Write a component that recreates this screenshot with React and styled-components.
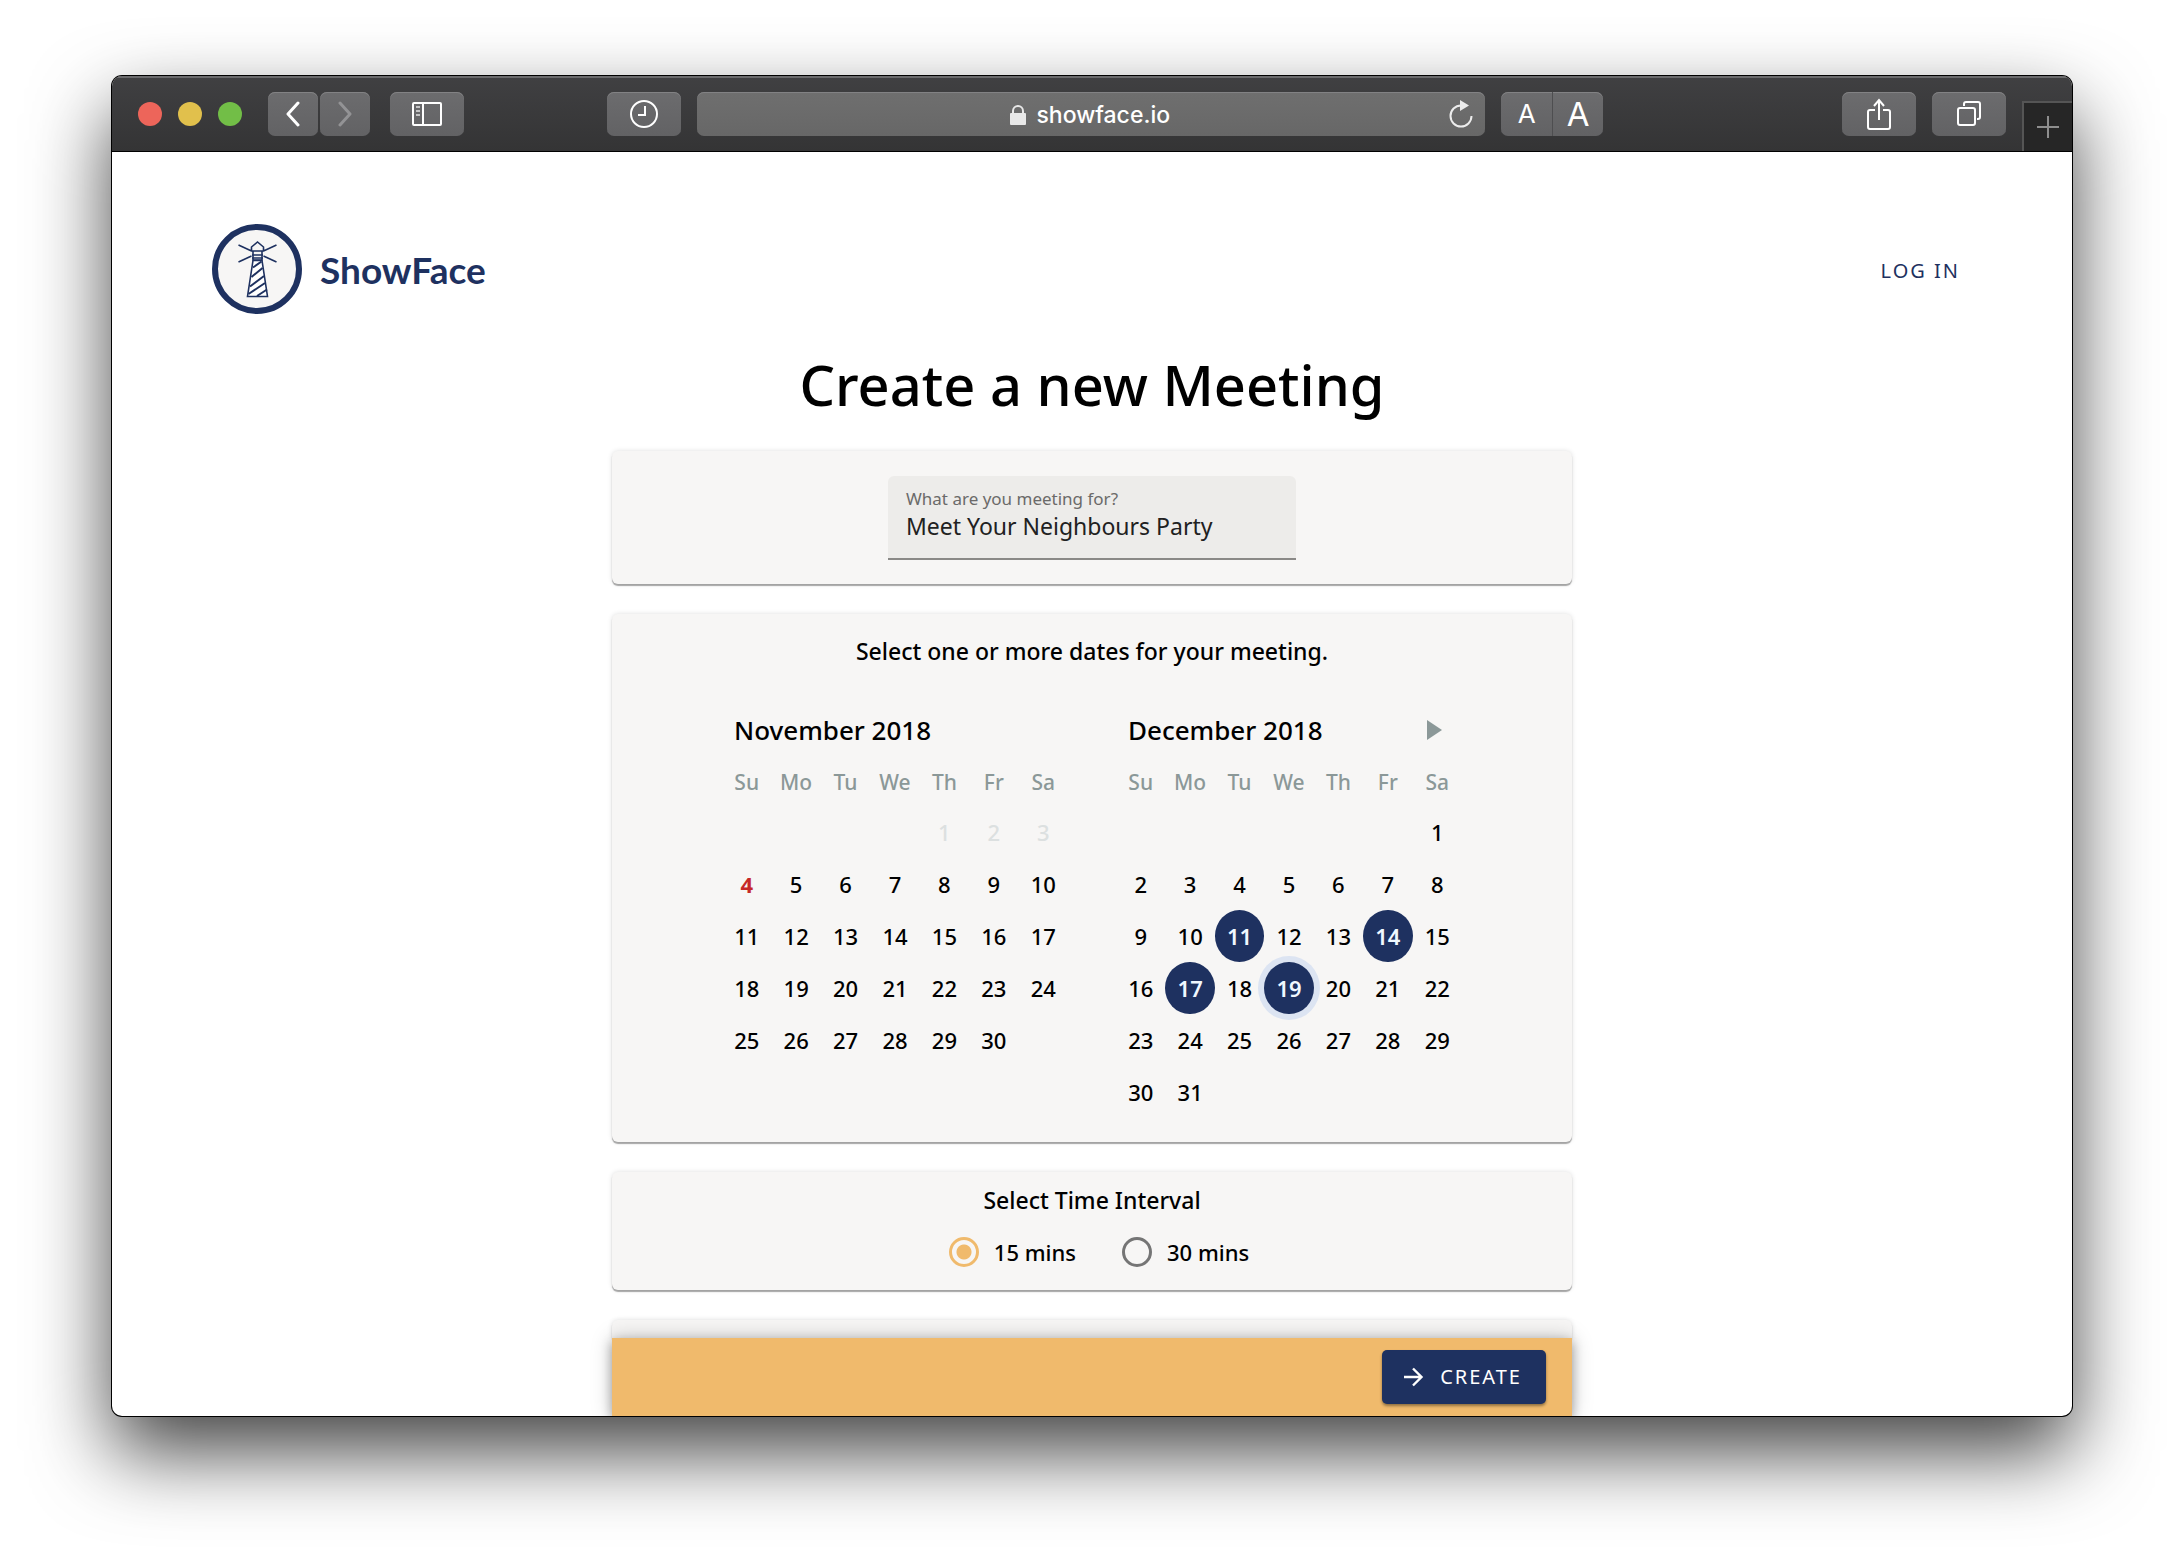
import React, { useState } from "react";
import styled, { createGlobalStyle } from "styled-components";

const NAVY = "#1e3160";
const AMBER = "#f0ba6c";
const PAPER = "#f7f6f5";
const UI_FONT = '"Noto Sans", "Open Sans", sans-serif';

const GlobalStyle = createGlobalStyle`
  *, *::before, *::after { box-sizing: border-box; }
  body { margin: 0; background: #fff; font-family: ${UI_FONT}; color: #000; }
  button { font: inherit; border: 0; padding: 0; margin: 0; cursor: pointer; }
  h1, h2, h3 { margin: 0; font-weight: 500; }
`;

const Desktop = styled.div`
  height: 100vh;
  min-height: 1564px;
  padding: 76px 112px 148px;
  display: flex;
  overflow: hidden;
`;

const Window = styled.div`
  flex: 1;
  min-width: 0;
  display: flex;
  flex-direction: column;
  border-radius: 10px;
  overflow: hidden;
  background: #fff;
  box-shadow: 0 0 0 1px #000, 0 36px 80px rgba(0, 0, 0, 0.74);
`;

const TitleBar = styled.div`
  height: 76px;
  flex: none;
  display: flex;
  align-items: center;
  padding-left: 26px;
  background: linear-gradient(#404042, #343435);
  border-bottom: 1px solid #000;
  box-shadow: inset 0 2px 0 #6b6b6d;
`;

const Lights = styled.div`
  display: flex;
  gap: 16px;
  margin-right: 26px;
`;

const Light = styled.button`
  width: 24px;
  height: 24px;
  border-radius: 50%;
  background: ${(p) => p.$color};
`;

const BarButton = styled.button`
  flex: none;
  width: ${(p) => p.$width || 74}px;
  height: 44px;
  display: flex;
  align-items: center;
  justify-content: center;
  color: ${(p) => (p.$dim ? "#939395" : "#fff")};
  background: linear-gradient(#6c6c6e, #626264);
  border-radius: ${(p) => p.$radius || "7px"};
  box-shadow: inset 0 1px 0 #828284;
`;

const Group = styled.div`
  display: flex;
  gap: ${(p) => p.$gap || 0}px;
  margin-right: ${(p) => p.$after || 0}px;
`;

const SizeButton = styled(BarButton)`
  font-family: Inter, sans-serif;
  font-size: ${(p) => p.$size}px;
  & + & { border-left: 1px solid #4e4e50; }
`;

const Spacer = styled.div`
  flex: ${(p) => p.$grow};
`;

const Address = styled.div`
  flex: 0 1 788px;
  height: 44px;
  margin: 0 16px;
  padding: 0 12px 0 34px;
  display: flex;
  align-items: center;
  background: linear-gradient(#6f6f6f, #676767);
  border-radius: 7px;
  box-shadow: inset 0 1px 0 #828284;
`;

const AddressText = styled.div`
  flex: 1;
  padding-top: 2px;
  display: flex;
  align-items: center;
  justify-content: center;
  gap: 10px;
  color: #fff;
  font: 500 23px/32px Inter, sans-serif;
`;

const PlainIconButton = styled.button`
  display: flex;
  background: none;
  color: ${(p) => p.$color};
`;

const NewTab = styled.button`
  align-self: flex-end;
  width: 50px;
  height: 50px;
  margin-left: 16px;
  display: flex;
  align-items: center;
  justify-content: center;
  color: #8e8e8e;
  background: #262626;
  border-left: 2px solid #555;
  border-top: 2px solid #555;
`;

const Page = styled.div`
  flex: 1;
  min-height: 0;
  display: flex;
  flex-direction: column;
`;

const Header = styled.header`
  display: flex;
  align-items: center;
  justify-content: space-between;
  padding: 72px 100px 0;
`;

const Brand = styled.a`
  display: flex;
  align-items: center;
  gap: 18px;
  color: ${NAVY};
  text-decoration: none;
`;

const BrandName = styled.span`
  padding-top: 2px;
  font: 700 37px/48px Lato, sans-serif;
`;

const LogIn = styled.a`
  padding: 16px 12px 12px;
  color: ${NAVY};
  font-size: 20px;
  line-height: 28px;
  letter-spacing: 2px;
  text-decoration: none;
`;

const Title = styled.h1`
  margin: 30px 0 27px;
  text-align: center;
  font-size: 56px;
  line-height: 80px;
`;

const Column = styled.main`
  flex: 1;
  width: 100%;
  max-width: 960px;
  margin: 0 auto;
  display: flex;
  flex-direction: column;
  gap: 30px;
`;

const Card = styled.section`
  padding: ${(p) => p.$pad || "0"};
  display: flex;
  flex-direction: column;
  align-items: center;
  background: ${PAPER};
  border-radius: 6px;
  box-shadow: 0 2px 1px rgba(0, 0, 0, 0.32), 0 0 5px rgba(0, 0, 0, 0.13);
`;

const NextCard = styled(Card)`
  flex: 1;
  border-radius: 6px 6px 0 0;
`;

const Field = styled.label`
  width: 408px;
  height: 84px;
  padding: 12px 18px 0;
  display: flex;
  flex-direction: column;
  background: #edecea;
  border-bottom: 2px solid #8a8987;
  border-radius: 6px 6px 0 0;
`;

const FieldLabel = styled.span`
  color: #6b6a69;
  font-size: 17px;
  line-height: 22px;
`;

const FieldInput = styled.input`
  width: 100%;
  height: 32px;
  padding: 0;
  border: 0;
  outline: 0;
  background: none;
  color: #212121;
  font: 400 23px/32px ${UI_FONT};
`;

const CardHeading = styled.h2`
  font-size: 23px;
  line-height: 32px;
`;

const Months = styled.div`
  display: flex;
  gap: 48px;
  margin-top: 45px;
`;

const Month = styled.div`
  width: 346px;
`;

const MonthBar = styled.div`
  display: flex;
  align-items: center;
  justify-content: space-between;
  padding: 0 20px 0 12px;
`;

const MonthName = styled.h3`
  font-size: 26px;
  line-height: 36px;
`;

const Days = styled.table`
  width: 100%;
  margin-top: 18px;
  table-layout: fixed;
  border-collapse: collapse;
`;

const Weekday = styled.th`
  height: 40px;
  padding: 0 0 8px;
  color: #8b9898;
  font-size: 21px;
  line-height: 28px;
  font-weight: 500;
`;

const DayCell = styled.td`
  height: 52px;
  padding: 0;
`;

const dayColor = (p) =>
  p.$selected ? "#f0f8ff" : p.$today ? "#c62828" : p.disabled ? "#dce0e0" : "#000";

const Day = styled.button`
  display: block;
  width: 100%;
  height: 52px;
  border-radius: 50%;
  outline: 0;
  background: ${(p) => (p.$selected ? NAVY : "none")};
  box-shadow: ${(p) => (p.$focused ? "0 0 0 6px #dce4f2" : "none")};
  color: ${dayColor};
  font-size: 22px;
  line-height: 52px;
  font-weight: ${(p) => (p.$today ? 700 : p.$selected ? 600 : 500)};
`;

const Options = styled.div`
  display: flex;
  gap: 46px;
  padding-left: 14px;
  margin-top: 20px;
`;

const Option = styled.label`
  display: flex;
  align-items: center;
  gap: 15px;
  font-size: 22px;
  line-height: 32px;
  font-weight: 500;
`;

const Radio = styled.input`
  appearance: none;
  width: 30px;
  height: 30px;
  margin: 0;
  border: 3px solid #757575;
  border-radius: 50%;
  &:checked {
    border-color: ${AMBER};
    background: radial-gradient(circle, ${AMBER} 7px, transparent 8px);
  }
`;

const ActionBar = styled.div`
  position: relative;
  flex: none;
  width: 100%;
  max-width: 960px;
  height: 78px;
  margin: 0 auto;
  padding: 0 26px;
  display: flex;
  align-items: center;
  justify-content: flex-end;
  background: ${AMBER};
  box-shadow: 0 4px 10px rgba(0, 0, 0, 0.3), 0 0 20px rgba(0, 0, 0, 0.22);
`;

const CreateButton = styled.button`
  height: 54px;
  padding: 0 24px 0 20px;
  display: flex;
  align-items: center;
  gap: 16px;
  color: #fff;
  background: ${NAVY};
  border-radius: 5px;
  box-shadow: 0 2px 3px rgba(0, 0, 0, 0.4);
  span {
    font-size: 20px;
    line-height: 28px;
    letter-spacing: 2px;
  }
`;

const WEEKDAYS = ["Su", "Mo", "Tu", "We", "Th", "Fr", "Sa"];

const Lighthouse = () => (
  <svg width="90" height="90" viewBox="0 0 90 90" fill="none" stroke={NAVY} strokeWidth="1.6" aria-hidden="true">
    <circle cx="45" cy="45" r="42" fill={PAPER} strokeWidth="6" />
    <path d="M39.500 27v-4l6-5 6 5v4zM41 27h9v9h-9zM40 31h11M40 34h11M26.500 21l13 6M64.500 21l-13 6M26.500 38l13-6M64.500 38l-13-6" />
    <path d="M41 36.500l-5.500 36h20l-5.500-36z" fill="#fff" />
    <path d="M41 43.500l8.500-6M39.500 53l11-9M38 62.500l14-10.500M36.500 70l16.500-11M45 72l10-6.500" strokeWidth="2" />
  </svg>
);

const Chevron = ({ flip }) => (
  <svg width="14" height="26" viewBox="0 0 14 26" fill="none" stroke="currentColor" strokeWidth="3" strokeLinecap="round" strokeLinejoin="round">
    <path d={flip ? "M2 2l10 11L2 24" : "M12 2L2 13l10 11"} />
  </svg>
);

const SidebarIcon = () => (
  <svg width="30" height="24" viewBox="0 0 30 24" fill="none" stroke="currentColor" strokeWidth="2">
    <rect x="1" y="1" width="28" height="22" rx="1" />
    <path d="M11 1v22" />
    <path d="M4 5h4M4 9h4M4 13h4" stroke="#c4c4c5" />
  </svg>
);

const ClockIcon = () => (
  <svg width="28" height="28" viewBox="0 0 28 28" fill="none" stroke="currentColor" strokeWidth="2">
    <circle cx="14" cy="14" r="13" />
    <path d="M15 6v9H8" />
  </svg>
);

const LockIcon = () => (
  <svg width="16" height="20" viewBox="0 0 16 20" fill="none">
    <rect y="8" width="16" height="12" rx="1" fill="#e8e8e8" />
    <path d="M3 9V6a5 5 0 0 1 10 0v3" stroke="#e8e8e8" strokeWidth="2" />
  </svg>
);

const ReloadIcon = () => (
  <svg width="24" height="28" viewBox="0 0 24 28" fill="none">
    <path d="M12 5.500A10.500 10.500 0 1 0 22.500 16" stroke="currentColor" strokeWidth="2" />
    <path d="M11 0l9 5.500-9 5.500z" fill="currentColor" />
  </svg>
);

const ShareIcon = () => (
  <svg width="24" height="32" viewBox="0 0 24 32" fill="none" stroke="currentColor" strokeWidth="2">
    <path d="M8 12H3a2 2 0 0 0-2 2v15a2 2 0 0 0 2 2h18a2 2 0 0 0 2-2V14a2 2 0 0 0-2-2h-5M12 22V3M7 8l5-6 5 6" />
  </svg>
);

const TabsIcon = () => (
  <svg width="24" height="26" viewBox="0 0 24 26" fill="none" stroke="currentColor" strokeWidth="2">
    <rect x="1" y="7" width="17" height="17" rx="2" />
    <path d="M7 5V3a2 2 0 0 1 2-2h12a2 2 0 0 1 2 2v13a2 2 0 0 1-2 2h-1" />
  </svg>
);

const PlusIcon = () => (
  <svg width="22" height="22" viewBox="0 0 22 22" stroke="currentColor" strokeWidth="2">
    <path d="M11 0v22M0 11h22" />
  </svg>
);

const ArrowIcon = () => (
  <svg width="22" height="22" viewBox="0 0 22 22" fill="none" stroke="currentColor" strokeWidth="2.400">
    <path d="M2 11h17M11 2.500l8.500 8.500-8.500 8.500" />
  </svg>
);

function Calendar({ name, offset, length, past = 0, today, selected, focused, onToggle, onNext }) {
  const weeks = [];
  for (let start = 1 - offset; start <= length; start += 7) {
    weeks.push(WEEKDAYS.map((_, i) => start + i));
  }
  return (
    <Month>
      <MonthBar>
        <MonthName>{name}</MonthName>
        {onNext && (
          <PlainIconButton $color="#8b9898" aria-label="Next month">
            <svg width="15" height="20" viewBox="0 0 15 20" fill="currentColor">
              <path d="M0 0l15 10L0 20z" />
            </svg>
          </PlainIconButton>
        )}
      </MonthBar>
      <Days aria-label={name}>
        <thead>
          <tr>{WEEKDAYS.map((d) => <Weekday key={d} scope="col">{d}</Weekday>)}</tr>
        </thead>
        <tbody>
          {weeks.map((week) => (
            <tr key={week[0]}>
              {week.map((d) => (
                <DayCell key={d}>
                  {d > 0 && d <= length && (
                    <Day
                      type="button"
                      disabled={d <= past}
                      $today={d === today}
                      $selected={selected.includes(d)}
                      $focused={d === focused}
                      onClick={() => onToggle(d)}
                    >
                      {d}
                    </Day>
                  )}
                </DayCell>
              ))}
            </tr>
          ))}
        </tbody>
      </Days>
    </Month>
  );
}

const toggle = (list, d) => (list.includes(d) ? list.filter((x) => x !== d) : [...list, d]);

export default function App() {
  const [meeting, setMeeting] = useState("Meet Your Neighbours Party");
  const [november, setNovember] = useState([]);
  const [december, setDecember] = useState([11, 14, 17, 19]);
  const [interval, setIntervalLength] = useState(15);

  return (
    <>
      <GlobalStyle />
      <Desktop>
        <Window>
          <TitleBar>
            <Lights>
              <Light $color="#ed655a" aria-label="Close" />
              <Light $color="#e1c04c" aria-label="Minimize" />
              <Light $color="#72be47" aria-label="Zoom" />
            </Lights>
            <Group $gap={2} $after={20}>
              <BarButton $width={50} aria-label="Back"><Chevron /></BarButton>
              <BarButton $width={50} $dim aria-label="Forward"><Chevron flip /></BarButton>
            </Group>
            <BarButton aria-label="Sidebar"><SidebarIcon /></BarButton>
            <Spacer $grow={3} />
            <BarButton aria-label="History"><ClockIcon /></BarButton>
            <Address>
              <AddressText><LockIcon />showface.io</AddressText>
              <PlainIconButton $color="#ececec" aria-label="Reload"><ReloadIcon /></PlainIconButton>
            </Address>
            <Group>
              <SizeButton $width={51} $size={26} $radius="7px 0 0 7px" aria-label="Smaller text">A</SizeButton>
              <SizeButton $width={51} $size={33} $radius="0 7px 7px 0" aria-label="Larger text">A</SizeButton>
            </Group>
            <Spacer $grow={5} />
            <Group $gap={16}>
              <BarButton aria-label="Share"><ShareIcon /></BarButton>
              <BarButton aria-label="Show tabs"><TabsIcon /></BarButton>
            </Group>
            <NewTab aria-label="New tab"><PlusIcon /></NewTab>
          </TitleBar>

          <Page>
            <Header>
              <Brand href="#home">
                <Lighthouse />
                <BrandName>ShowFace</BrandName>
              </Brand>
              <LogIn href="#login">LOG IN</LogIn>
            </Header>
            <Title>Create a new Meeting</Title>
            <Column>
              <Card $pad="25px 24px 24px">
                <Field>
                  <FieldLabel>What are you meeting for?</FieldLabel>
                  <FieldInput value={meeting} onChange={(e) => setMeeting(e.target.value)} />
                </Field>
              </Card>
              <Card $pad="21px 24px 24px">
                <CardHeading>Select one or more dates for your meeting.</CardHeading>
                <Months>
                  <Calendar
                    name="November 2018" offset={4} length={30} past={3} today={4}
                    selected={november} onToggle={(d) => setNovember(toggle(november, d))}
                  />
                  <Calendar
                    name="December 2018" offset={6} length={31} focused={19} onNext
                    selected={december} onToggle={(d) => setDecember(toggle(december, d))}
                  />
                </Months>
              </Card>
              <Card $pad="12px 24px 22px">
                <CardHeading>Select Time Interval</CardHeading>
                <Options role="radiogroup">
                  {[15, 30].map((n) => (
                    <Option key={n}>
                      <Radio type="radio" name="interval" checked={interval === n} onChange={() => setIntervalLength(n)} />
                      {n} mins
                    </Option>
                  ))}
                </Options>
              </Card>
              <NextCard />
            </Column>
            <ActionBar>
              <CreateButton type="button"><ArrowIcon /><span>CREATE</span></CreateButton>
            </ActionBar>
          </Page>
        </Window>
      </Desktop>
    </>
  );
}
